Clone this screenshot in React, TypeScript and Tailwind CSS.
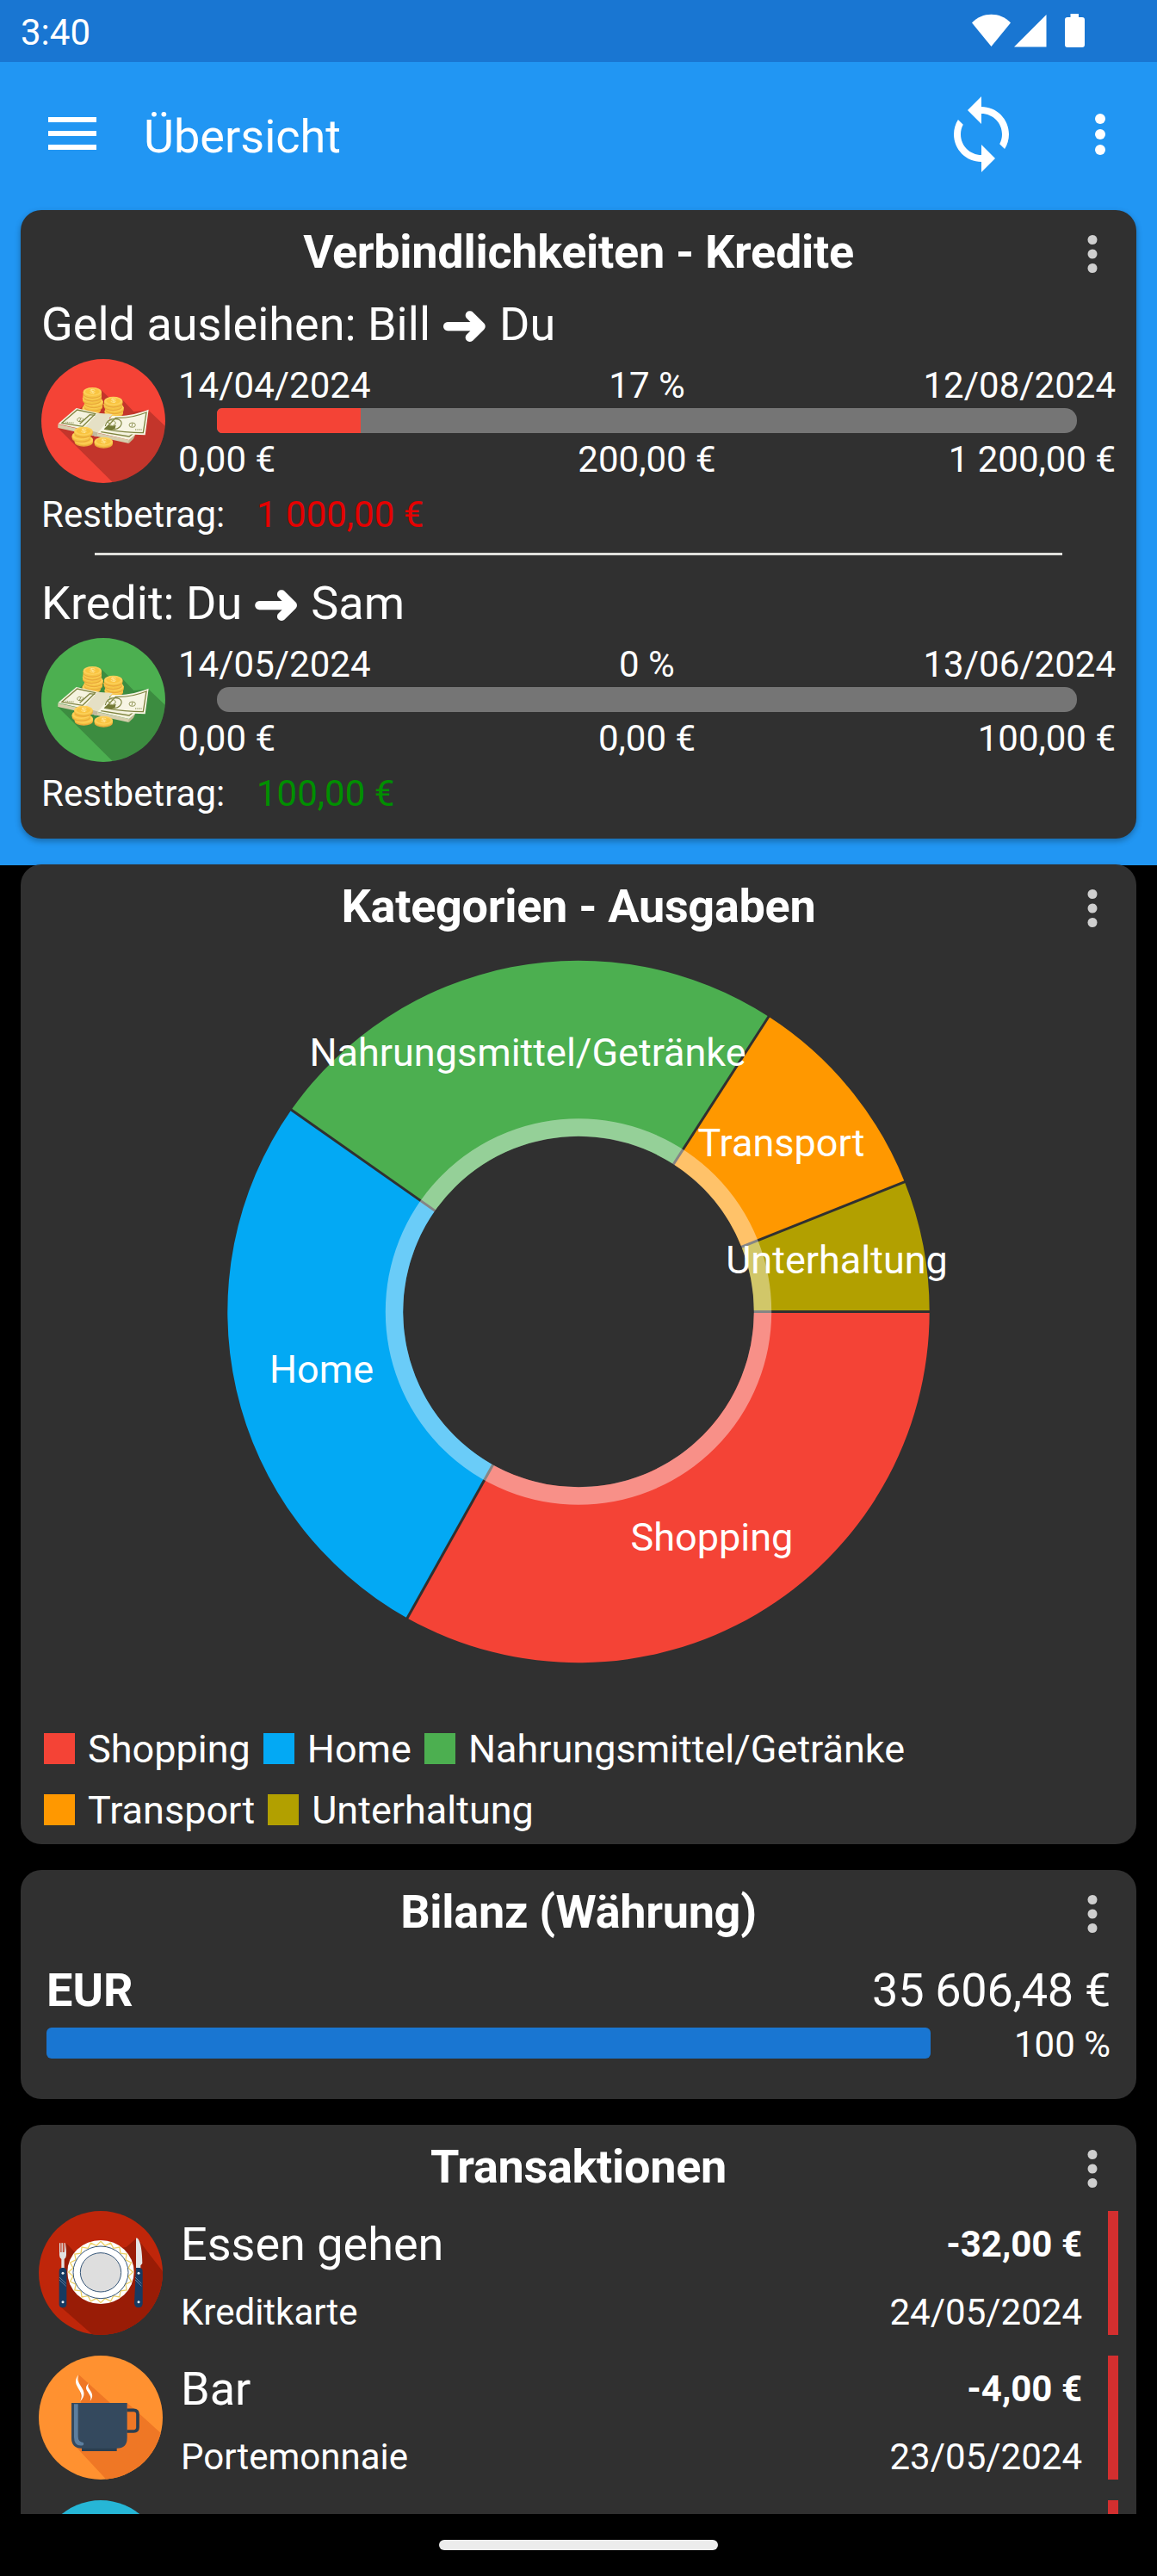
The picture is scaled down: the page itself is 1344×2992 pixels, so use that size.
import type { FC, ReactNode } from "react";

interface ILoan {
  title: [string, string];
  color: string;
  start: string;
  end: string;
  percent: string;
  progress: number;
  from: string;
  current: string;
  total: string;
  rest: string;
  restClass: string;
}

interface ITransaction {
  name: string;
  account: string;
  amount: string;
  date: string;
  icon: ReactNode;
}

interface ISlice {
  label: string;
  color: string;
  start: number;
  end: number;
  x: number;
  y: number;
}

const loans: ILoan[] = [
  {
    title: ["Geld ausleihen: Bill", "Du"],
    color: "#f44336",
    start: "14/04/2024",
    end: "12/08/2024",
    percent: "17 %",
    progress: 16.7,
    from: "0,00 €",
    current: "200,00 €",
    total: "1 200,00 €",
    rest: "1 000,00 €",
    restClass: "text-[#e60000]",
  },
  {
    title: ["Kredit: Du", "Sam"],
    color: "#4caf50",
    start: "14/05/2024",
    end: "13/06/2024",
    percent: "0 %",
    progress: 0,
    from: "0,00 €",
    current: "0,00 €",
    total: "100,00 €",
    rest: "100,00 €",
    restClass: "text-[#008f00]",
  },
];

// angles in degrees, clockwise from 3 o'clock
const slices: ISlice[] = [
  { label: "Shopping", color: "#f44336", start: 0, end: 119.2, x: 827, y: 1801 },
  { label: "Home", color: "#03a9f4", start: 119.2, end: 215.1, x: 373.5, y: 1606 },
  { label: "Nahrungsmittel/Getränke", color: "#4caf50", start: 215.1, end: 302.8, x: 613, y: 1237.5 },
  { label: "Transport", color: "#ff9800", start: 302.8, end: 338.3, x: 907.5, y: 1343 },
  { label: "Unterhaltung", color: "#b2a000", start: 338.3, end: 360, x: 972, y: 1479 },
];

const CX = 672;
const CY = 1523.5;
const OUTER = 407.7;
const INNER = 203.8;

const point = (angle: number, r: number) => {
  const a = (angle * Math.PI) / 180;
  return `${(CX + r * Math.cos(a)).toFixed(2)} ${(CY + r * Math.sin(a)).toFixed(2)}`;
};

const slicePath = ({ start, end }: ISlice) => {
  const large = end - start > 180 ? 1 : 0;
  return `M${point(start, OUTER)} A${OUTER} ${OUTER} 0 ${large} 1 ${point(end, OUTER)} L${point(end, INNER)} A${INNER} ${INNER} 0 ${large} 0 ${point(start, INNER)} Z`;
};

const DotsIcon: FC<{ className: string }> = ({ className }) => (
  <svg viewBox="0 0 24 24" fill="currentColor" className={className}>
    <circle cx="12" cy="6" r="2" />
    <circle cx="12" cy="12" r="2" />
    <circle cx="12" cy="18" r="2" />
  </svg>
);

const Coin: FC<{ x: number; y: number }> = ({ x, y }) => (
  <g>
    <path d={`M${x - 32} ${y} v9 a32 15 0 0 0 64 0 v-9z`} fill="#e9a93a" />
    <path d={`M${x - 32} ${y} v5 a32 15 0 0 0 64 0 v-5z`} fill="#f5c444" />
    <ellipse cx={x} cy={y} rx="32" ry="15" fill="#fdd05a" />
    <ellipse cx={x} cy={y} rx="25" ry="10.5" fill="#f9c440" />
  </g>
);

const CoinMark: FC<{ x: number; y: number }> = ({ x, y }) => (
  <path
    d={`M${x + 9} ${y - 4} c-6 -4 -17 -3 -16 1 c1 4 15 1 15 6 c0 4 -12 4 -17 0 M${x - 4} ${y - 8} l8 16`}
    fill="none"
    stroke="#ffe9a0"
    strokeWidth="2.5"
  />
);

const MoneyIcon: FC<{ color: string }> = ({ color }) => (
  <svg viewBox="24 21 432 432" className="size-36 shrink-0 rounded-full">
    <rect x="24" y="21" width="432" height="432" fill={color} />
    <path d="M232 128 L264 159 L303 159 L346 204 L397 199 L470 268 V470 H292 L82 262Z" opacity=".2" />
    <Coin x={199} y={191} />
    <Coin x={205} y={180} />
    <Coin x={207} y={169} />
    <Coin x={200} y={157} />
    <Coin x={202} y={146} />
    <Coin x={202} y={135} />
    <CoinMark x={202} y={134} />
    <Coin x={277} y={202} />
    <Coin x={279} y={190} />
    <Coin x={274} y={178} />
    <Coin x={275} y={167} />
    <CoinMark x={275} y={166} />
    <path d="M82 248 L330 303 L329 315 L82 261Z" fill="#d5ceac" />
    <path d="M330 303 L352 284 L345 299 L329 315Z" fill="#c4bb94" />
    <path d="M82 247 L146 192 L230 211 L352 284 L330 303Z" fill="#f5f3df" />
    <path d="M96 244 L149 198 L212 212 L168 256Z" fill="none" stroke="#7f8440" strokeWidth="4" />
    <path d="M158 247 L193 215 L211 217" fill="none" stroke="#7f8440" strokeWidth="4" />
    <path d="M232 275 L330 291 L345 280" fill="none" stroke="#7f8440" strokeWidth="4" />
    <path d="M160 226 c-11 -2 -15 11 -4 13 c9 1 17 -8 12 -12 M163 225 l-7 15" fill="none" stroke="#7f8440" strokeWidth="2.5" />
    <path d="M109 241 l30 3" stroke="#a5a873" strokeWidth="4" strokeDasharray="3 2" />
    <path d="M230 269 L271 218 C320 222 360 211 398 197 L386 286 C336 284 285 278 230 269Z" fill="#f7f5e3" />
    <path d="M246 265 L283 226 C325 228 360 219 390 207 L379 278 C333 278 290 273 246 265Z" fill="none" stroke="#7f8440" strokeWidth="4" />
    <path d="M247 255 C250 239 262 229 281 230 C306 231 308 246 297 258 C288 268 267 268 252 263" fill="none" stroke="#7f8440" strokeWidth="3.5" />
    <path d="M244 263 L258 251 L270 255 L284 251 L281 263 L267 269Z" fill="#737936" />
    <path d="M258 237 l9 -4 l10 4 l6 5 l-2 7 l-9 5 l-12 -4 l5 -5 l-9 -2z" fill="none" stroke="#8e9351" strokeWidth="3" />
    <ellipse cx="341" cy="251" rx="11" ry="8" fill="none" stroke="#7f8440" strokeWidth="2.5" />
    <path d="M342 244 l-3 13" stroke="#7f8440" strokeWidth="2.5" />
    <path d="M351 267 h24" stroke="#a5a873" strokeWidth="4" strokeDasharray="3 2" />
    <path d="M175 260 L220 209 L272 213 L228 270 L219 278 L219 292 L175 280Z" fill="#e5e0c5" />
    <path d="M180 266 L219 277 V291 L180 283Z" fill="#c2b99e" />
    <Coin x={172} y={302} />
    <Coin x={163} y={288} />
    <Coin x={171} y={272} />
    <CoinMark x={172} y={271} />
    <Coin x={241} y={308} />
    <CoinMark x={241} y={307} />
  </svg>
);

const plateEdge = Array.from({ length: 40 }, (_, i) => {
  const a = (i * Math.PI) / 20;
  const k = i % 2 === 0 ? 1 : 0.87;
  return `${(231 + 112 * k * Math.sin(a)).toFixed(1)},${(237 - 107 * k * Math.cos(a)).toFixed(1)}`;
}).join(" ");

const DiningIcon = () => (
  <svg viewBox="15 24 432 432" className="size-36 shrink-0 rounded-full">
    <rect x="15" y="24" width="432" height="432" fill="#bf260a" />
    <path d="M110 136 L150 178 L320 150 L357 118 L460 252 V460 H208 L90 357Z" fill="#991c06" />
    <path d="M87 136 h4 v32 h4 v-32 h4 v32 h4 v-32 h4 v32 l4 -32 v42 q0 10 -7 14 V224 H94 V192 q-7 -4 -7 -14Z" fill="#e2e2e2" />
    <path d="M93 136 h4 v32 h-4z M101 136 h4 v32 h-4z" fill="#c98a7c" />
    <rect x="86" y="222" width="26" height="139" rx="12" fill="#173a61" />
    <path d="M354 120 Q356 114 362 122 Q375 142 376 207 L370 214 V224 H354Z" fill="#e4e4e4" />
    <path d="M354 222 h11 q12 0 12 14 V346 q0 15 -14 15 q-14 0 -15 -15z" fill="#173a61" />
    <g stroke="#6c89a6" strokeWidth="2.5">
      <path d="M87 255 l23 22 M87 264 l23 22 M351 255 l22 22 M351 264 l22 22" />
    </g>
    <g fill="#e9eef2">
      <circle cx="99" cy="241" r="4.5" />
      <circle cx="99" cy="341" r="4.5" />
      <circle cx="363" cy="241" r="4.5" />
      <circle cx="363" cy="341" r="4.5" />
    </g>
    <ellipse cx="231" cy="237" rx="116" ry="111" fill="#fff" />
    <polygon points={plateEdge} fill="none" stroke="#ecd169" strokeWidth="4" />
    <ellipse cx="231" cy="238" rx="96" ry="91" fill="#fff" stroke="#365678" strokeWidth="3" />
    <ellipse cx="231" cy="238" rx="71" ry="68" fill="#dedede" stroke="#365678" strokeWidth="3" />
  </svg>
);

const CupIcon = () => (
  <svg viewBox="15 528 432 432" className="size-36 shrink-0 rounded-full">
    <rect x="15" y="528" width="432" height="432" fill="#ff9130" />
    <path d="M154 594 L264 693 H323 L345 712 L460 816 V970 H260 L142 843 L162 690Z" fill="#ef7725" />
    <path d="M154 594 C136 617 146 629 155 646 C164 662 168 668 160 687 C178 668 174 653 164 638 C151 617 147 612 154 594Z" fill="#fff" />
    <path d="M189 624 C173 640 182 648 189 659 C195 669 199 673 194 686 C205 673 203 662 195 650 C186 637 185 636 189 624Z" fill="#fff" />
    <path d="M322 718 h24 q14 0 14 14 v46 q0 14 -14 14 h-24" fill="none" stroke="#2b3e50" strokeWidth="11" />
    <rect x="165" y="848" width="122" height="13" fill="#2b3e50" />
    <path d="M129 693 H323 V815 Q323 851 287 851 H165 Q129 851 129 815Z" fill="#34495e" />
    <path d="M138 697 H152 V810 Q152 829 170 831 Q174 836 169 841 Q138 846 138 812Z" fill="#5c7e9e" />
  </svg>
);

const transactions: ITransaction[] = [
  { name: "Essen gehen", account: "Kreditkarte", amount: "-32,00 €", date: "24/05/2024", icon: <DiningIcon /> },
  { name: "Bar", account: "Portemonnaie", amount: "-4,00 €", date: "23/05/2024", icon: <CupIcon /> },
  {
    name: "",
    account: "",
    amount: "",
    date: "",
    icon: <div className="size-36 shrink-0 rounded-full bg-[#26b6d6]"></div>,
  },
];

const Card: FC<{ title: string; className?: string; children: ReactNode }> = ({ title, className, children }) => (
  <section className={`rounded-3xl bg-[#303030] shadow-[0_3px_7px_rgba(0,0,0,0.3)] ${className ?? ""}`}>
    <header className="grid h-[100px] grid-cols-[102px_1fr_102px]">
      <h2 className="col-start-2 text-center text-[54px] leading-[97px] font-bold tracking-[-0.3px] whitespace-nowrap">
        {title}
      </h2>
      <button className="flex h-[102px] items-center justify-center text-[#cfcfcf]">
        <DotsIcon className="size-[66px]" />
      </button>
    </header>
    {children}
  </section>
);

const StatusBar = () => (
  <div className="flex h-[72px] items-center bg-[#1976d2] pl-6">
    <span className="pt-[3px] text-[42px] leading-[48px]">3:40</span>
    <svg viewBox="1124 12 140 48" className="mr-20 ml-auto h-12 w-[140px]" fill="#fff">
      <path d="M1129 26.5 C1141 13.500 1162 13.500 1174 26.500 L1151.500 54Z" />
      <path d="M1178 54.500 L1215.500 17 V54.500Z" />
      <path d="M1243.500 16 H1253 V20 H1257 Q1260 20 1260 23 V52 Q1260 55 1257 55 H1240 Q1237 55 1237 52 V23 Q1237 20 1240 20 H1243.500Z" />
    </svg>
  </div>
);

const Toolbar = () => (
  <div className="flex h-[168px] items-center bg-[#2196f3] pr-[30px] pl-14">
    <button className="flex w-14 flex-col gap-2.5 pb-0.5">
      <span className="h-1.5 bg-white"></span>
      <span className="h-1.5 bg-white"></span>
      <span className="h-1.5 bg-white"></span>
    </button>
    <h1 className="ml-[55px] pt-[5px] text-[54px] leading-[64px]">Übersicht</h1>
    <svg viewBox="0 0 24 24" fill="currentColor" className="ml-auto size-24">
      <path d="M12 4V1L8 5l4 4V6c3.31 0 6 2.69 6 6 0 1.01-.25 1.97-.7 2.8l1.46 1.46C19.54 15.03 20 13.57 20 12c0-4.42-3.58-8-8-8zm0 14c-3.31 0-6-2.69-6-6 0-1.01.25-1.97.7-2.8L5.24 7.74C4.46 8.97 4 10.43 4 12c0 4.42 3.58 8 8 8v3l4-4-4-4v3z" />
    </svg>
    <DotsIcon className="ml-[54px] size-[72px]" />
  </div>
);

const LoanItem: FC<{ loan: ILoan }> = ({ loan }) => (
  <div className="text-[42px] leading-[49px] whitespace-nowrap">
    <h3 className="flex h-[61px] text-[54px] leading-[61px]">
      {loan.title[0]}
      <span className="flex w-20 justify-center pt-px font-['DejaVu_Sans',sans-serif] text-[66px] [-webkit-text-stroke:2px_white]">
        ➜
      </span>
      {loan.title[1]}
    </h3>
    <div className="mt-2.5 flex h-36 gap-[15px]">
      <MoneyIcon color={loan.color} />
      <div className="flex-1 pt-1.5">
        <div className="grid grid-cols-3">
          <span>{loan.start}</span>
          <span className="text-center">{loan.percent}</span>
          <span className="text-right">{loan.end}</span>
        </div>
        <div className={`mx-[45px] mt-0.5 h-[29px] bg-[#757575] ${loan.progress > 0 ? "rounded-l-md rounded-r-[14px]" : "rounded-[14px]"}`}>
          <div className="h-full rounded-l-md" style={{ width: `${loan.progress}%`, backgroundColor: loan.color }}></div>
        </div>
        <div className="mt-1.5 grid grid-cols-3">
          <span>{loan.from}</span>
          <span className="text-center">{loan.current}</span>
          <span className="text-right">{loan.total}</span>
        </div>
      </div>
    </div>
    <p className="mt-3 flex">
      <span className="w-[250px]">Restbetrag:</span>
      <span className={loan.restClass}>{loan.rest}</span>
    </p>
  </div>
);

const CategoryChart = () => (
  <svg viewBox="24 1104 1296 892" className="block h-[892px] w-full">
    {slices.map((slice) => (
      <path key={slice.label} d={slicePath(slice)} fill={slice.color} />
    ))}
    {slices.map((slice) => (
      <path
        key={slice.label}
        d={`M${point(slice.start, INNER - 1)} L${point(slice.start, OUTER + 1)}`}
        stroke="#303030"
        strokeWidth="3"
      />
    ))}
    <circle cx={CX} cy={CY} r="214" fill="none" stroke="#fff" strokeOpacity=".41" strokeWidth="20.4" />
    <g fill="#fff" fontSize="45" textAnchor="middle">
      {slices.map((slice) => (
        <text key={slice.label} x={slice.x} y={slice.y}>
          {slice.label}
        </text>
      ))}
    </g>
  </svg>
);

const LegendRow: FC<{ items: ISlice[] }> = ({ items }) => (
  <div className="flex h-[71px] items-center gap-[15px] pl-[27px] text-[45px] leading-[71px]">
    {items.map((item) => (
      <div key={item.label} className="flex items-center gap-[15px]">
        <span className="mb-0.5 size-9" style={{ backgroundColor: item.color }}></span>
        {item.label}
      </div>
    ))}
  </div>
);

const TransactionRow: FC<{ item: ITransaction }> = ({ item }) => (
  <div className="flex h-36 px-[21px] text-[42px] leading-[60px]">
    {item.icon}
    <div className="ml-[21px]">
      <p className="h-[78px] text-[54px] leading-[78px]">{item.name}</p>
      <p className="mt-2.5">{item.account}</p>
    </div>
    <div className="ml-auto text-right">
      <p className="h-[78px] leading-[78px] font-bold">{item.amount}</p>
      <p className="mt-2.5">{item.date}</p>
    </div>
    <div className="ml-[30px] w-3 bg-[#d32f2f]"></div>
  </div>
);

export default function App() {
  return (
    <div className="flex h-[2992px] w-[1344px] flex-col overflow-hidden bg-black font-[Roboto,sans-serif] text-white">
      <StatusBar />
      <Toolbar />
      <main className="flex h-[2680px] flex-col gap-[30px] overflow-hidden bg-[linear-gradient(#2196f3_765px,#000_765px)] px-6 pt-1">
        <Card title="Verbindlichkeiten - Kredite" className="h-[730px] shrink-0">
          <div className="px-6 pt-0.5">
            <LoanItem loan={loans[0]} />
            <hr className="mx-[62px] mt-5 mb-[25px] h-[3px] border-0 bg-[#e0e0dc]" />
            <LoanItem loan={loans[1]} />
          </div>
        </Card>
        <Card title="Kategorien - Ausgaben" className="h-[1138px] shrink-0">
          <CategoryChart />
          <LegendRow items={slices.slice(0, 3)} />
          <LegendRow items={slices.slice(3)} />
        </Card>
        <Card title="Bilanz (Währung)" className="h-[266px] shrink-0">
          <div className="px-[30px] pt-0.5">
            <div className="flex justify-between text-[54px] leading-[75px]">
              <span className="font-bold">EUR</span>
              <span className="tracking-[-0.3px]">35 606,48 €</span>
            </div>
            <div className="flex justify-between text-[42px] leading-[52px]">
              <div className="mt-1.5 h-9 w-[1027px] rounded-md bg-[#1976d2]"></div>
              <span>100 %</span>
            </div>
          </div>
        </Card>
        <Card title="Transaktionen" className="shrink-0">
          <div className="flex flex-col gap-6">
            {transactions.map((item) => (
              <TransactionRow key={item.date} item={item} />
            ))}
          </div>
        </Card>
      </main>
      <div className="flex h-[72px] items-center justify-center">
        <div className="h-3 w-[324px] rounded-full bg-[#ececec]"></div>
      </div>
    </div>
  );
}
